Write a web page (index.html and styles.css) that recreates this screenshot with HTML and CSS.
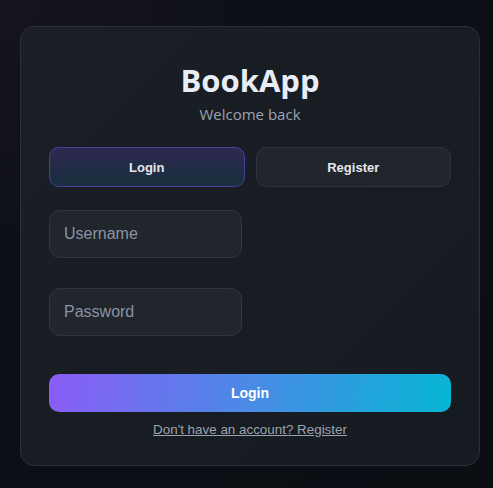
FILE: index.html
```html
<!DOCTYPE html>
<html>
<head>
  <title>BookApp - Login</title>
  <link rel="stylesheet" href="styles.css">
</head>
<body>
  <div class="auth-card">
    <h1 class="brand">BookApp</h1>
    <p class="subtitle">Welcome back</p>

    <div class="tabs">
      <button class="tab active">Login</button>
      <button class="tab">Register</button>
    </div>

    <form class="auth-form">
      <input type="text" class="field" placeholder="Username">
      <input type="password" class="field" placeholder="Password">
      <button type="button" class="submit">Login</button>
    </form>

    <a href="#" class="switch-link">Don't have an account? Register</a>
  </div>
</body>
</html>
```

FILE: styles.css
```css
* {
  margin: 0;
  padding: 0;
  box-sizing: border-box;
}

html, body {
  width: 100%;
  height: 100%;
}

body {
  font-family: 'Liberation Sans', Arial, sans-serif;
  background: radial-gradient(circle at 0% 0%, #15141f 0%, #0c0f15 45%, #0b0e13 100%);
  color: #e5e7eb;
  padding: 26px 13px 0 20px;
  overflow: hidden;
}

.auth-card {
  width: 460px;
  height: 440px;
  background: linear-gradient(135deg, #1a1e25 0%, #181c23 50%, #161a21 100%);
  border: 1px solid #2a2f38;
  border-radius: 14px;
  padding: 32px 28px 0 28px;
  display: flex;
  flex-direction: column;
  align-items: center;
}

.brand {
  font-family: 'Open Sans', sans-serif;
  font-size: 31px;
  font-weight: 700;
  color: #e8ecf4;
  line-height: 42px;
}

.subtitle {
  font-family: 'Open Sans', sans-serif;
  font-size: 15px;
  color: #9aa3b1;
  margin-top: 3px;
  line-height: 20px;
}

.tabs {
  display: grid;
  grid-template-columns: 1fr 1fr;
  gap: 11px;
  width: 100%;
  margin-top: 23px;
}

.tab {
  height: 40px;
  border-radius: 10px;
  border: 1px solid #2f333c;
  background: #21252c;
  color: #e5e7eb;
  font-family: 'Liberation Sans', Arial, sans-serif;
  font-size: 13px;
  font-weight: 600;
  cursor: pointer;
}

.tab.active {
  background: linear-gradient(180deg, #2e2850 0%, #172f3c 100%);
  border-color: #4c3fa3;
}

.auth-form {
  width: 100%;
  display: flex;
  flex-direction: column;
  align-items: flex-start;
  margin-top: 23px;
}

.field {
  width: 193px;
  height: 48px;
  border-radius: 11px;
  border: 1px solid #30353e;
  background: #21252c;
  padding: 0 14px;
  font-family: 'Liberation Sans', Arial, sans-serif;
  font-size: 16px;
  color: #e5e7eb;
  margin-bottom: 30px;
  outline: none;
}

.field::placeholder {
  color: #8a94a3;
}

.field + .field {
  margin-bottom: 38px;
}

.submit {
  width: 100%;
  height: 38px;
  border: none;
  border-radius: 10px;
  background: linear-gradient(100deg, #8b5cf6 0%, #4a8ae6 50%, #06b6d4 100%);
  color: #ffffff;
  font-family: 'Liberation Sans', Arial, sans-serif;
  font-size: 14px;
  font-weight: 700;
  cursor: pointer;
}

.switch-link {
  margin-top: 10px;
  font-size: 13.4px;
  color: #9ca3af;
  text-decoration: underline;
}
```
